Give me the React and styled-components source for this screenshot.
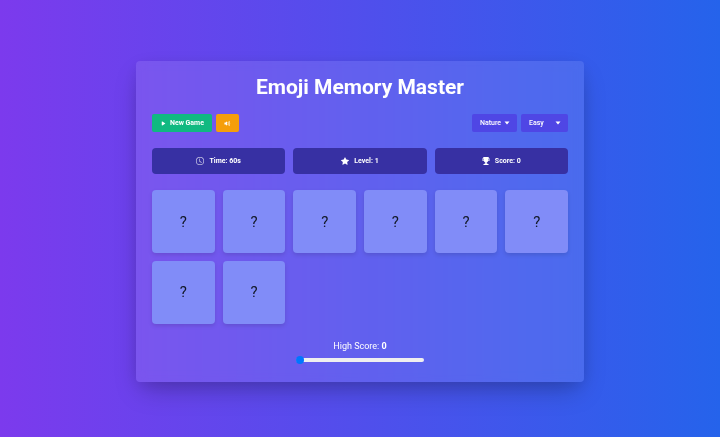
import React, { useState } from "react";
import styled, { createGlobalStyle } from "styled-components";
import { BsPlayFill, BsVolumeUpFill, BsClock, BsStarFill, BsTrophyFill } from "react-icons/bs";

const GlobalStyle = createGlobalStyle`
  *, *::before, *::after { box-sizing: border-box; }
  body {
    margin: 0;
    font-family: Roboto, "Liberation Sans", sans-serif;
    color: #ffffff;
  }
  button, select, input { font: inherit; color: inherit; margin: 0; }
`;

const Page = styled.div`
  min-height: 100vh;
  display: flex;
  align-items: center;
  justify-content: center;
  padding: 14px 8px 8px;
  background: linear-gradient(to right, #7c3aed, #2563eb);
`;

const Panel = styled.main`
  width: 100%;
  max-width: 448px;
  padding: 16px;
  border-radius: 4px;
  background: rgba(255, 255, 255, 0.1);
  box-shadow: 0 12px 25px -6px rgba(0, 0, 0, 0.25), 0 4px 16px rgba(0, 0, 0, 0.08);
  backdrop-filter: blur(5px);
`;

const Title = styled.h1`
  margin: 0 0 17px;
  font-size: 21px;
  line-height: 20px;
  font-weight: 700;
  text-align: center;
`;

const Toolbar = styled.div`
  display: flex;
  justify-content: space-between;
  margin-bottom: 16px;
`;

const Group = styled.div`
  display: flex;
  gap: 4px;
`;

const Button = styled.button`
  display: flex;
  align-items: center;
  gap: 3px;
  height: 18px;
  padding: 0 8px;
  border: 0;
  border-radius: 2px;
  background: ${({ $tone }) => $tone};
  font-size: 7px;
  font-weight: 700;
  cursor: pointer;

  svg { width: 7px; height: 7px; }
`;

const SelectBox = styled.div`
  display: grid;
  align-items: center;
  width: ${({ $wide }) => ($wide ? 47 : 45)}px;

  > * { grid-area: 1 / 1; }
  > svg {
    justify-self: end;
    margin-right: 7px;
    width: 6px;
    height: 4px;
    pointer-events: none;
  }
`;

const Select = styled.select`
  appearance: none;
  width: 100%;
  height: 18px;
  padding: 0 8px;
  border: 0;
  border-radius: 2px;
  background: #4f46e5;
  font-size: 7px;
  font-weight: 500;
`;

const Stats = styled.section`
  display: grid;
  grid-template-columns: repeat(3, 1fr);
  gap: 8px;
  margin-bottom: 16px;
`;

const Stat = styled.div`
  display: flex;
  align-items: center;
  justify-content: center;
  gap: 5px;
  height: 26px;
  border-radius: 4px;
  background: #3730a3;
  font-size: 7px;
  font-weight: 700;

  svg { width: 8px; height: 8px; }
`;

const Board = styled.section`
  display: grid;
  grid-template-columns: repeat(6, 1fr);
  gap: 8px;
  margin-bottom: 16px;
`;

const Card = styled.button`
  display: flex;
  align-items: center;
  justify-content: center;
  aspect-ratio: 1;
  padding: 0;
  border: 0;
  border-radius: 4px;
  background: #818cf8;
  box-shadow: 0 2px 4px rgba(0, 0, 0, 0.12);
  color: #111827;
  font-size: 15px;
  cursor: pointer;
`;

const Footer = styled.footer`
  display: flex;
  flex-direction: column;
  align-items: center;
  gap: 4px;
  padding-bottom: 2px;
`;

const HighScore = styled.label`
  font-size: 9px;
  line-height: 12px;

  b { font-weight: 700; }
`;

const Slider = styled.input`
  appearance: none;
  width: 128px;
  height: 8px;
  background: transparent;

  &::-webkit-slider-runnable-track {
    height: 4px;
    border-radius: 2px;
    background: #efefef;
  }
  &::-webkit-slider-thumb {
    appearance: none;
    width: 8px;
    height: 8px;
    margin-top: -2px;
    border-radius: 50%;
    background: #0075ff;
  }
`;

function Dropdown({ label, options, wide }) {
  return (
    <SelectBox $wide={wide}>
      <Select aria-label={label} defaultValue={options[0]}>
        {options.map((option) => (
          <option key={option}>{option}</option>
        ))}
      </Select>
      <svg viewBox="0 0 6 4" fill="currentColor" aria-hidden="true">
        <path d="M0.5 0.5h5L3 3.5z" />
      </svg>
    </SelectBox>
  );
}

const cards = Array.from({ length: 8 }, (_, index) => index + 1);

export default function App() {
  const [progress, setProgress] = useState(0);

  return (
    <Page>
      <GlobalStyle />
      <Panel>
        <Title>Emoji Memory Master</Title>
        <Toolbar>
          <Group>
            <Button $tone="#10b981">
              <BsPlayFill /> New Game
            </Button>
            <Button $tone="#f59e0b" aria-label="Sound">
              <BsVolumeUpFill />
            </Button>
          </Group>
          <Group>
            <Dropdown label="Theme" options={["Nature", "Food", "Faces"]} />
            <Dropdown label="Difficulty" options={["Easy", "Medium", "Hard"]} wide />
          </Group>
        </Toolbar>
        <Stats>
          <Stat><BsClock /> Time: 60s</Stat>
          <Stat><BsStarFill /> Level: 1</Stat>
          <Stat><BsTrophyFill /> Score: 0</Stat>
        </Stats>
        <Board>
          {cards.map((id) => (
            <Card key={id} aria-label={`Card ${id}`}>?</Card>
          ))}
        </Board>
        <Footer>
          <HighScore htmlFor="progress">High Score: <b>0</b></HighScore>
          <Slider
            id="progress"
            type="range"
            min="0"
            max="100"
            value={progress}
            onChange={(event) => setProgress(Number(event.target.value))}
          />
        </Footer>
      </Panel>
    </Page>
  );
}
